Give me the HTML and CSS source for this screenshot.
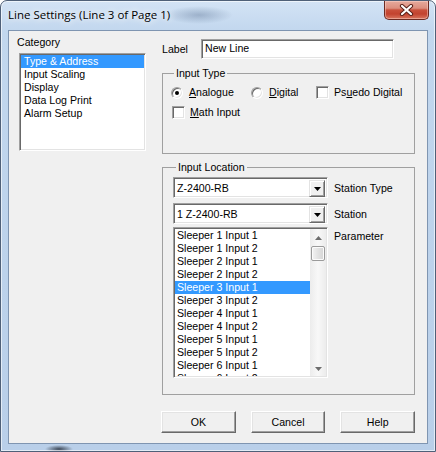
FILE: index.html
```html
<!DOCTYPE html>
<html>
<head>
<meta charset="utf-8">
<title>Line Settings</title>
<link rel="stylesheet" href="styles.css">
</head>
<body>
<div class="window">
  <div class="titlebar">
    <span class="title">Line Settings (Line 3 of Page 1)</span>
    <div class="close">
      <svg width="15" height="12" viewBox="0 0 15 12">
        <path d="M3 2 L12 10 M12 2 L3 10" stroke="#5a2119" stroke-width="4.2" stroke-linecap="round" fill="none"/>
        <path d="M3 2 L12 10 M12 2 L3 10" stroke="#ffffff" stroke-width="2.2" stroke-linecap="round" fill="none"/>
      </svg>
    </div>
  </div>
  <div class="client">
    <div class="left">
      <div class="cat-label">Category</div>
      <div class="listbox cat-list">
        <div class="item sel">Type &amp; Address</div>
        <div class="item">Input Scaling</div>
        <div class="item">Display</div>
        <div class="item">Data Log Print</div>
        <div class="item">Alarm Setup</div>
      </div>
    </div>
    <div class="right">
      <div class="label-row">
        <span class="label-text">Label</span>
        <div class="edit">New Line</div>
      </div>
      <fieldset class="group type-group">
        <legend>Input Type</legend>
        <div class="opt-row">
          <div class="opt opt-a"><span class="radio on"></span><span><u>A</u>nalogue</span></div>
          <div class="opt opt-d"><span class="radio"></span><span><u>D</u>igital</span></div>
          <div class="opt"><span class="check"></span><span>Ps<u>u</u>edo Digital</span></div>
        </div>
        <div class="opt-row row2">
          <div class="opt"><span class="check"></span><span><u>M</u>ath Input</span></div>
        </div>
      </fieldset>
      <fieldset class="group loc-group">
        <legend>Input Location</legend>
        <div class="ctl-row">
          <div class="combo"><span class="combo-text">Z-2400-RB</span><span class="drop"><svg width="7" height="4" viewBox="0 0 7 4"><path d="M0 0H7L3.5 4Z" fill="#000"/></svg></span></div>
          <span class="ctl-label">Station Type</span>
        </div>
        <div class="ctl-row r2">
          <div class="combo"><span class="combo-text">1 Z-2400-RB</span><span class="drop"><svg width="7" height="4" viewBox="0 0 7 4"><path d="M0 0H7L3.5 4Z" fill="#000"/></svg></span></div>
          <span class="ctl-label">Station</span>
        </div>
        <div class="ctl-row r3">
          <div class="listbox param-list">
            <div class="items">
              <div class="item">Sleeper 1 Input 1</div>
              <div class="item">Sleeper 1 Input 2</div>
              <div class="item">Sleeper 2 Input 1</div>
              <div class="item">Sleeper 2 Input 2</div>
              <div class="item sel">Sleeper 3 Input 1</div>
              <div class="item">Sleeper 3 Input 2</div>
              <div class="item">Sleeper 4 Input 1</div>
              <div class="item">Sleeper 4 Input 2</div>
              <div class="item">Sleeper 5 Input 1</div>
              <div class="item">Sleeper 5 Input 2</div>
              <div class="item">Sleeper 6 Input 1</div>
              <div class="item">Sleeper 6 Input 2</div>
            </div>
            <div class="scrollbar">
              <div class="sb-btn"><svg width="7" height="4" viewBox="0 0 7 4"><path d="M0 4H7L3.5 0Z" fill="#6d6d6d"/></svg></div>
              <div class="sb-thumb"></div>
              <div class="sb-track"></div>
              <div class="sb-btn down"><svg width="7" height="4" viewBox="0 0 7 4"><path d="M0 0H7L3.5 4Z" fill="#6d6d6d"/></svg></div>
            </div>
          </div>
          <span class="ctl-label param">Parameter</span>
        </div>
      </fieldset>
      <div class="buttons">
        <div class="btn">OK</div>
        <div class="btn">Cancel</div>
        <div class="btn">Help</div>
      </div>
    </div>
  </div>
</div>
</body>
</html>
```

FILE: styles.css
```css
* { box-sizing: border-box; }
html, body { margin: 0; padding: 0; }
body {
  width: 436px;
  height: 452px;
  overflow: hidden;
  background: #ffffff;
  font-family: "Liberation Sans", Arial, sans-serif;
  font-size: 10.6px;
  color: #000;
}

.window {
  width: 436px;
  height: 452px;
  border: 1px solid #4f6078;
  border-radius: 7px 7px 0 0;
  background:
    radial-gradient(ellipse 34px 9px at 198px 14px, rgba(70, 95, 130, 0.35), rgba(70, 95, 130, 0)),
    radial-gradient(ellipse 14px 4px at 58px 448px, rgba(20, 28, 40, 0.75), rgba(20, 28, 40, 0)),
    linear-gradient(#d3e3f5, #c2d7ee 30px, #bcd2eb 60%, #b9cfe9);
  box-shadow: inset 0 0 0 1px rgba(255, 255, 255, 0.6);
  padding: 0 7px 7px 7px;
  display: flex;
  flex-direction: column;
}

.titlebar {
  height: 29px;
  display: flex;
  align-items: flex-start;
}
.title {
  font-family: "Open Sans", "Noto Sans", sans-serif;
  font-size: 11.5px;
  line-height: 16px;
  margin-top: 6px;
  color: #000;
  text-shadow: 0 0 6px #fff, 0 0 10px rgba(255, 255, 255, 0.9);
}
.close {
  margin-left: auto;
  margin-right: -1px;
  width: 45px;
  height: 19px;
  border: 1px solid #6b2a22;
  border-top: none;
  border-radius: 0 0 5px 5px;
  background: linear-gradient(#e6aa9d 0%, #dc8e7e 40%, #c9503b 50%, #c2432f 72%, #d9765f 100%);
  box-shadow: inset 0 0 0 1px rgba(255, 220, 210, 0.45);
  display: flex;
  align-items: center;
  justify-content: center;
}
.close svg { display: block; }

.client {
  flex: 1;
  background: #f0f0f0;
  border: 1px solid #7f95b1;
  display: flex;
}

/* left column */
.left {
  width: 153px;
  padding-left: 8px;
}
.cat-label {
  margin-top: 5px;
  line-height: 13px;
}
.listbox {
  background: #fff;
  border: 1px solid;
  border-color: #a0a0a0 #fff #fff #a0a0a0;
  box-shadow: inset 1px 1px 0 #696969, inset -1px -1px 0 #e3e3e3;
  padding: 1px;
}
.cat-list {
  margin-top: 4px;
  margin-left: 2px;
  width: 127px;
  height: 98px;
}
.item {
  height: 13px;
  line-height: 13px;
  padding-left: 3px;
  white-space: nowrap;
}
.item.sel {
  background: #3399ff;
  color: #fff;
}

/* right column */
.right {
  width: 253px;
}
.label-row {
  margin-top: 8px;
  height: 20px;
  display: flex;
  align-items: center;
}
.label-text {
  width: 39px;
}
.edit {
  width: 193px;
  height: 20px;
  line-height: 16px;
  background: #fff;
  border: 1px solid;
  border-color: #a0a0a0 #fff #fff #a0a0a0;
  box-shadow: inset 1px 1px 0 #696969, inset -1px -1px 0 #e3e3e3;
  padding-left: 3px;
}

.group {
  margin: 0;
  padding: 0;
  min-width: 0;
  border: 1px solid #a0a0a0;
}
.group legend {
  margin-left: 3px;
  padding: 0 2px;
  line-height: 13px;
}

.type-group {
  margin-top: 8px;
  padding: 6px 0 34px 8px;
}
.opt-row {
  display: flex;
  align-items: center;
  height: 13px;
}
.opt-row.row2 { margin-top: 7px; margin-left: 1px; }
.opt {
  display: flex;
  align-items: center;
  line-height: 13px;
}
.opt-a { width: 80px; }
.opt-d { width: 65px; }
.radio {
  width: 12px;
  height: 12px;
  border-radius: 50%;
  border: 1px solid;
  border-color: #a0a0a0 #fff #fff #a0a0a0;
  box-shadow: inset 1px 1px 0 #696969, inset -1px -1px 0 #e3e3e3;
  background: #fff;
  margin-right: 6px;
  display: flex;
  align-items: center;
  justify-content: center;
}
.radio.on::after {
  content: "";
  width: 4px;
  height: 4px;
  border-radius: 50%;
  background: #000;
}
.check {
  width: 13px;
  height: 13px;
  border: 1px solid;
  border-color: #a0a0a0 #fff #fff #a0a0a0;
  box-shadow: inset 1px 1px 0 #696969, inset -1px -1px 0 #e3e3e3;
  background: #fff;
  margin-right: 5px;
}

.loc-group {
  margin-top: 7px;
  padding: 3px 0 16px 10px;
}
.ctl-row {
  display: flex;
  align-items: center;
}
.ctl-row.r2 { margin-top: 5px; }
.ctl-row.r3 { margin-top: 3px; align-items: flex-start; }
.ctl-label { margin-left: 6px; }
.ctl-label.param { margin-top: 3px; }
.combo {
  width: 155px;
  height: 21px;
  background: #fff;
  border: 1px solid;
  border-color: #a0a0a0 #fff #fff #a0a0a0;
  box-shadow: inset 1px 1px 0 #696969, inset -1px -1px 0 #e3e3e3;
  padding: 2px;
  display: flex;
}
.combo-text {
  flex: 1;
  line-height: 17px;
  padding-left: 1px;
}
.drop {
  width: 16px;
  height: 17px;
  background: #f0f0f0;
  border: 1px solid;
  border-color: #e3e3e3 #696969 #696969 #e3e3e3;
  box-shadow: inset 1px 1px 0 #fff, inset -1px -1px 0 #a0a0a0;
  display: flex;
  align-items: center;
  justify-content: center;
}
.drop svg, .sb-btn svg { display: block; }

.param-list {
  width: 155px;
  height: 151px;
  display: flex;
}
.param-list .items {
  flex: 1;
  overflow: hidden;
}
.param-list .item { padding-left: 2px; }
.scrollbar {
  width: 16px;
  display: flex;
  flex-direction: column;
  background: linear-gradient(90deg, #ececec, #f8f8f8 50%, #ececec);
}
.sb-btn {
  height: 17px;
  display: flex;
  align-items: center;
  justify-content: center;
}
.sb-btn.down { height: 14px; }
.sb-thumb {
  height: 15px;
  margin: 0 1px;
  border: 1px solid #9b9b9b;
  border-radius: 2px;
  background: linear-gradient(90deg, #f3f3f3, #e2e2e2 50%, #d6d6d6);
  box-shadow: inset 0 0 0 1px #fbfbfb;
}
.sb-track { flex: 1; }

.buttons {
  margin-top: 16px;
  margin-left: -1px;
  display: flex;
  gap: 15px;
}
.btn {
  width: 75px;
  height: 22px;
  background: #f0f0f0;
  border: 1px solid;
  border-color: #fff #696969 #696969 #fff;
  box-shadow: inset -1px -1px 0 #a0a0a0, inset 1px 1px 0 #e3e3e3;
  display: flex;
  align-items: center;
  justify-content: center;
  line-height: 13px;
}
```
